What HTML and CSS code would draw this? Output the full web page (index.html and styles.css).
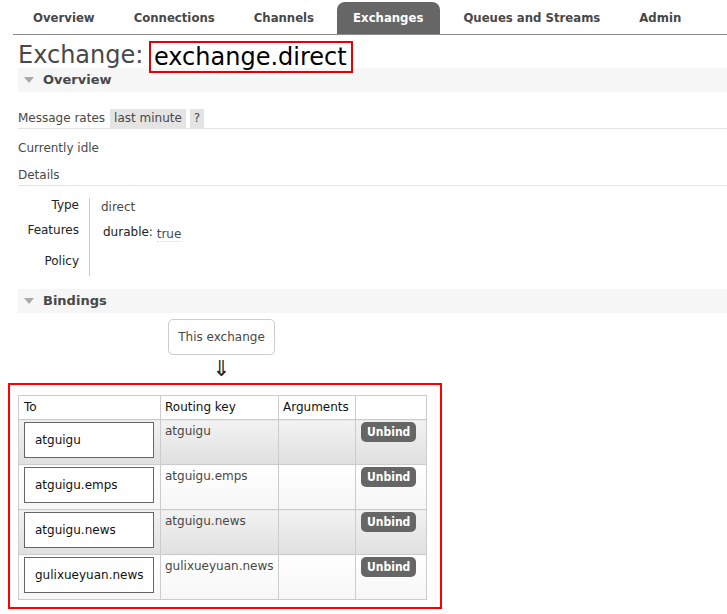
FILE: index.html
```html
<!DOCTYPE html>
<html>
<head>
<meta charset="utf-8">
<link rel="stylesheet" href="styles.css">
</head>
<body>
<div class="menu">
  <ul>
    <li>Overview</li>
    <li>Connections</li>
    <li>Channels</li>
    <li class="active">Exchanges</li>
    <li>Queues and Streams</li>
    <li>Admin</li>
  </ul>
</div>
<div class="main">
  <h1>Exchange: <span class="hl">exchange.direct</span></h1>
  <div class="section-h"><span class="tri"></span>Overview</div>
  <div class="rates"><span class="lbl">Message rates</span><span class="pill">last minute</span><span class="pill q">?</span></div>
  <p class="idle">Currently idle</p>
  <div class="details-h">Details</div>
  <div class="facts">
    <div class="keys">
      <div class="k k1">Type</div>
      <div class="k k2">Features</div>
      <div class="k k3">Policy</div>
    </div>
    <div class="vals">
      <div class="v v1">direct</div>
      <div class="v v2"><span class="fk">durable:</span> <span class="fv">true</span></div>
    </div>
  </div>
  <div class="section-h bind"><span class="tri"></span>Bindings</div>
  <div class="flow">
    <div class="thisx">This exchange</div>
    <div class="arrow">⇓</div>
  </div>
  <div class="redbox">
    <table class="list">
      <colgroup>
        <col class="w1"><col class="w2"><col class="w3"><col class="w4">
      </colgroup>
      <thead>
        <tr><th class="c1">To</th><th>Routing key</th><th>Arguments</th><th></th></tr>
      </thead>
      <tbody>
        <tr class="alt1"><td><div class="dest">atguigu</div></td><td>atguigu</td><td></td><td class="act"><span class="btn">Unbind</span></td></tr>
        <tr class="alt2"><td><div class="dest">atguigu.emps</div></td><td>atguigu.emps</td><td></td><td class="act"><span class="btn">Unbind</span></td></tr>
        <tr class="alt1"><td><div class="dest">atguigu.news</div></td><td>atguigu.news</td><td></td><td class="act"><span class="btn">Unbind</span></td></tr>
        <tr class="alt2"><td><div class="dest">gulixueyuan.news</div></td><td>gulixueyuan.news</td><td></td><td class="act"><span class="btn">Unbind</span></td></tr>
      </tbody>
    </table>
  </div>
</div>
</body>
</html>
```
FILE: styles.css
```css
html, body {
  margin: 0;
  padding: 0;
  background: #fff;
}
body {
  font-family: "DejaVu Sans", Verdana, sans-serif;
  font-size: 12px;
  color: #484848;
}
.menu {
  margin-left: 13px;
  padding-top: 2px;
  border-bottom: 1px solid #8c8c8c;
}
.menu ul {
  list-style: none;
  margin: 0 0 0 4px;
  padding: 0;
  display: flex;
  gap: 7px;
}
.menu li {
  font-family: "DejaVu Sans Condensed", "DejaVu Sans", sans-serif;
  font-weight: bold;
  font-size: 13px;
  height: 32px;
  line-height: 32px;
  padding: 0 16px;
  color: #484848;
  border-radius: 8px 8px 0 0;
}
.menu li.active {
  background: #666;
  color: #fff;
  padding: 0 17px 0 16px;
}
.main {
  padding-left: 18px;
}
h1 {
  margin: 0;
  padding-top: 4px;
  height: 29px;
  font-weight: normal;
  font-size: 24px;
  line-height: 30px;
  color: #484848;
  white-space: nowrap;
}
.hl {
  color: #000;
  border: 2px solid #e60000;
  padding: 0 4px 0 3px;
  display: inline-block;
  line-height: 28px;
  margin-left: -2px;
  position: relative;
  top: 2px;
  z-index: 1;
}
.section-h {
  background: #f6f6f6;
  height: 24px;
  line-height: 24px;
  font-weight: bold;
  font-size: 13px;
  padding-left: 6px;
  display: flex;
  align-items: center;
  color: #484848;
}
.tri {
  width: 0;
  height: 0;
  border-left: 5px solid transparent;
  border-right: 5px solid transparent;
  border-top: 6px solid #aaa;
  margin-right: 9px;
}
.rates {
  margin-top: 17px;
  display: flex;
  align-items: stretch;
  height: 19px;
  line-height: 19px;
  border-bottom: 1px solid #e4e4e4;
}
.lbl {
  margin-right: 5px;
}
.pill {
  background: #e4e4e4;
  padding: 0 4px;
  margin-right: 4px;
}
.idle {
  margin: 11px 0 0;
  line-height: 16px;
}
.details-h {
  margin-top: 11px;
  line-height: 16px;
  padding-bottom: 2px;
  border-bottom: 1px solid #e4e4e4;
}
.facts {
  display: flex;
  margin-top: 12px;
}
.keys {
  width: 61px;
  text-align: right;
  padding-right: 10px;
  border-right: 1px solid #ccc;
  height: 78px;
  color: #222;
}
.k1 { line-height: 14px; }
.k2 { margin-top: 11px; line-height: 14px; }
.k3 { margin-top: 17px; line-height: 14px; }
.vals {
  padding-left: 11px;
}
.v1 { margin-top: 2px; line-height: 14px; }
.v2 { margin-top: 11px; line-height: 14px; padding-left: 2px; }
.fk { color: #222; }
.fv {
  border-bottom: 1px dotted #ddd;
  position: relative;
  top: 2px;
}
.section-h.bind {
  margin-top: 13px;
}
.flow {
  margin-left: 150px;
  width: 107px;
  display: flex;
  flex-direction: column;
  align-items: center;
  margin-top: 6px;
}
.thisx {
  width: 105px;
  height: 34px;
  line-height: 34px;
  text-align: center;
  border: 1px solid #ccc;
  border-radius: 5px;
}
.arrow {
  font-size: 22px;
  line-height: 26px;
  height: 27px;
  color: #222;
  margin-top: 1px;
}
.redbox {
  margin-left: -10px;
  width: 408px;
  border: 2px solid #f00;
  padding: 10px 14px 7px 8px;
}
table.list {
  border-collapse: collapse;
  table-layout: fixed;
  width: 408px;
}
col.w1 { width: 142px; }
col.w2 { width: 118px; }
col.w3 { width: 77px; }
col.w4 { width: 71px; }
.list th, .list td {
  border: 1px solid #ccc;
  text-align: left;
  vertical-align: top;
  padding: 0;
}
.list th {
  font-weight: normal;
  height: 23px;
  line-height: 23px;
  padding-left: 4px;
  color: #111;
  background: #fff;
}
.list th.c1 { padding-left: 5px; }
.list td {
  height: 41px;
  padding: 3px 4px 0 4px;
  line-height: 16px;
  white-space: nowrap;
}
.list td:first-child {
  padding: 2px 5px 0 5px;
  height: 42px;
}
.list td.act {
  padding: 2px 4px 0 5px;
  height: 42px;
}
tr.alt1 td {
  background: linear-gradient(#f2f2f2, #e0e0e0);
}
tr.alt2 td {
  background: linear-gradient(#ffffff, #f6f6f6);
}
.dest {
  width: 118px;
  height: 34px;
  line-height: 34px;
  border: 1px solid #666;
  background: #fff;
  padding-left: 10px;
  color: #111;
  white-space: nowrap;
}
.btn {
  display: inline-block;
  background: #666;
  color: #fff;
  font-weight: bold;
  font-family: "DejaVu Sans Condensed", "DejaVu Sans", sans-serif;
  font-size: 12px;
  height: 20px;
  line-height: 20px;
  padding: 0 6px;
  border-radius: 5px;
}
```
